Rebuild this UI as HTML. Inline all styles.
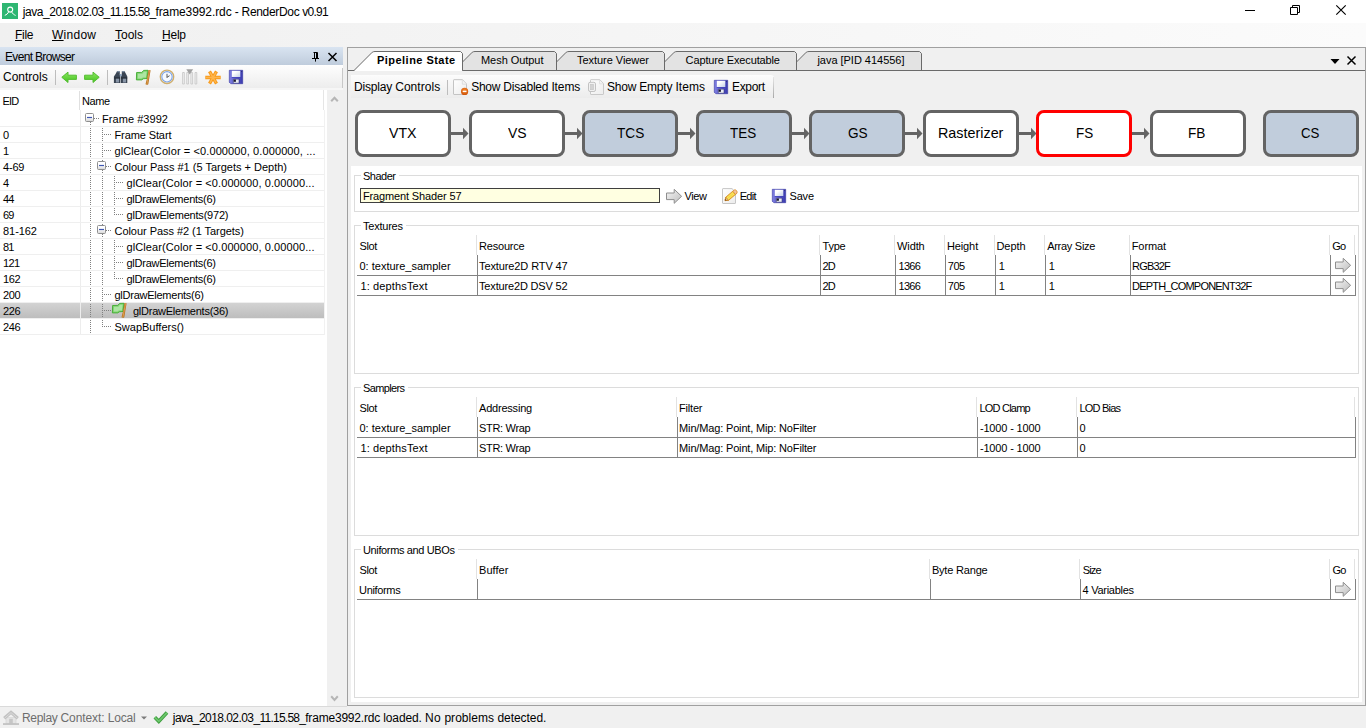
<!DOCTYPE html>
<html><head><meta charset="utf-8"><title>RenderDoc</title>
<style>
*{box-sizing:border-box;margin:0;padding:0}
html,body{width:1366px;height:728px;overflow:hidden;background:#f0f0f0}
body{position:relative;font-family:"Liberation Sans",sans-serif;font-size:12px;color:#000}
.a{position:absolute}
.t{position:absolute;white-space:pre;line-height:14px}
u{text-decoration:underline;text-underline-offset:1px;text-decoration-thickness:1px}
svg{position:absolute;overflow:visible}
.hl{position:absolute;height:1px;background:#efefef}
.vl{position:absolute;width:1px}
.box{position:absolute;border:3px solid #646464;border-radius:8px;background:#fff;height:47px;width:96px}
.box.dis{background:#c1cddc}
.grp{position:absolute;border:1px solid #dcdcdc}
.lbl{position:absolute;background:#fff;height:3px}
.rl{position:absolute;height:1px;background:#828282}
.cl{position:absolute;width:1px;background:#828282}
.hcl{position:absolute;width:1px;background:#e2e2e2}
</style></head><body>
<div class="a" style="left:0;top:0;width:1366px;height:23px;background:#fff"></div>
<div class="a" style="left:2px;top:3px;width:16px;height:16px;background:#2eb672"></div>
<svg style="left:2px;top:3px" width="16" height="16" viewBox="0 0 16 16"><circle cx="8.2" cy="6.6" r="2.5" fill="none" stroke="#fff" stroke-width="1.1"/><path d="M2.8 12.4C4.6 11.7 5.9 10.6 6.7 9M13.6 12.4C11.8 11.7 10.5 10.6 9.7 9" stroke="#fff" stroke-width="1" fill="none"/></svg>
<svg style="left:1240px;top:0" width="126" height="23" viewBox="0 0 126 23"><path d="M5 10.500h10M50.500 7.500h7v7h-7zM52.500 7.500v-2h7v7h-2" stroke="#000" stroke-width="1" fill="none"/><path d="M96.300 5.300l9.400 9.400M105.700 5.300l-9.400 9.400" stroke="#000" stroke-width="1.150" fill="none"/></svg>
<div class="a" style="left:0;top:23px;width:1366px;height:24px;background:linear-gradient(to right,#f0f0f0,#fbfbfb)"></div>
<div class="a" style="left:0;top:47px;width:343px;height:18px;background:linear-gradient(#d9e4f1,#bfccdc)"></div>
<svg style="left:308px;top:50px" width="32" height="16" viewBox="0 0 32 16"><path d="M5.500 2.500h4M6.500 2.500v6M8.500 2.500v6M9.500 2.500v6M4 8.500h7M7.500 9v2.600" stroke="#000" stroke-width="1" fill="none"/><path d="M20.500 3l8 8M28.500 3l-8 8" stroke="#000" stroke-width="1.500" fill="none"/></svg>
<div class="a" style="left:0;top:65px;width:343px;height:24px;background:linear-gradient(#fefefe,#ececec)"></div>
<div class="a" style="left:0;top:88px;width:343px;height:2px;background:#f6f6f6"></div>
<div class="vl" style="left:342px;top:68px;height:20px;background:#c8c8c8"></div>
<div class="vl" style="left:55px;top:70px;height:15px;background:#bdbdbd"></div>
<div class="vl" style="left:107px;top:70px;height:15px;background:#bdbdbd"></div>
<svg style="left:0;top:0" width="0" height="0"><defs>
<linearGradient id="gG" x1="0" y1="0" x2="0" y2="1"><stop offset="0" stop-color="#8be85f"/><stop offset="1" stop-color="#43c220"/></linearGradient>
<linearGradient id="gA" x1="0" y1="0" x2="1" y2="1"><stop offset="0" stop-color="#f6f6f6"/><stop offset="1" stop-color="#bdbdbd"/></linearGradient>
<linearGradient id="gS" x1="0" y1="0" x2="1" y2="0"><stop offset="0" stop-color="#7f7fe2"/><stop offset="1" stop-color="#3a3aae"/></linearGradient>
<linearGradient id="gL" x1="0" y1="0" x2="1" y2="1"><stop offset="0.3" stop-color="#ffffff"/><stop offset="1" stop-color="#c3cfe6"/></linearGradient>
<linearGradient id="gP" x1="0" y1="0" x2="1" y2="1"><stop offset="0" stop-color="#ffffff"/><stop offset="1" stop-color="#ececec"/></linearGradient>
<linearGradient id="gB" x1="0" y1="0" x2="0" y2="1"><stop offset="0.45" stop-color="#ffffff"/><stop offset="1" stop-color="#d4d4d4"/></linearGradient>
<radialGradient id="gO" cx="0.5" cy="0.35" r="0.6"><stop offset="0" stop-color="#f58a2c"/><stop offset="1" stop-color="#d1560a"/></radialGradient>
</defs></svg>
<svg style="left:61px;top:69px" width="16" height="16" viewBox="0 0 16 16"><path d="M0.800 8.300L7 3.100V6.200H15.400V10.400H7V13.500Z" fill="url(#gG)" stroke="#55bd33" stroke-width="1" stroke-linejoin="round"/></svg>
<svg style="left:84px;top:69px" width="16" height="16" viewBox="0 0 16 16"><path d="M15.200 8.300L9 3.100V6.200H0.600V10.400H9V13.500Z" fill="url(#gG)" stroke="#55bd33" stroke-width="1" stroke-linejoin="round"/></svg>
<svg style="left:113px;top:69px" width="16" height="16" viewBox="0 0 16 16"><path d="M4 2.200h2.800v3.300l0.500 1.500v6.900h-6.400v-6.400l1.700 -2.500zM8.800 2.200h2.800l1.400 2.800l1.300 2.500v6.400h-6.400v-6.900l0.900 -1.500z" fill="#3a4553"/><path d="M4.300 2.200h2.200v1h-2.200zM9.100 2.200h2.200v1h-2.200z" fill="#7e93ad"/><path d="M6.800 5h2v2.300h-2z" fill="#8ea6c0"/><path d="M2.900 9.300h3.100v4.200h-3.100zM9.900 9.300h3.100v4.200h-3.100z" fill="#8794a6"/><path d="M1.200 8.600h5.900v0.900h-5.900zM8 8.600h6.200v0.900h-6.200z" fill="#1f2731"/></svg>
<svg style="left:136px;top:69px" width="16" height="16" viewBox="0 0 16 16"><path d="M0.600 3.500L5.800 3.400L7.600 1.400L12 1.300L11 9.500L7.200 9.800L5.800 10.900L0.400 10.900Z" fill="#7fd46f" stroke="#3faa30" stroke-width="0.900" stroke-linejoin="round"/><path d="M2 4.800L6.300 4.700L8 2.800L10.600 2.700L9.900 8.400L6.800 8.600L5.400 9.600L1.800 9.600Z" fill="#b4e8ab" opacity="0.850"/><path d="M12.500 1.100Q13.600 0.600 14.600 1.300L12.300 15.200Q11 16.300 9.500 15.300L11.200 8.500Z" fill="#b87421"/><path d="M13.500 1.600L11 14.800" stroke="#e2a455" stroke-width="0.900" stroke-linecap="round"/></svg>
<svg style="left:159px;top:69px" width="16" height="16" viewBox="0 0 16 16"><circle cx="8" cy="7.800" r="6.700" fill="#fff" stroke="#cfae6c" stroke-width="1.400"/><circle cx="8" cy="7.800" r="5.200" fill="#f6f9ff" stroke="#7ba3e6" stroke-width="1.100"/><path d="M8 8.600V4.800M7.800 8.400L10.600 6.700" stroke="#5a5a5a" stroke-width="1" fill="none"/></svg>
<svg style="left:182px;top:69px" width="16" height="16" viewBox="0 0 16 16"><path d="M0.60 3.500h1.700v11.500h-1.700zM4.75 3.500h1.700v11.500h-1.700zM8.90 3.500h1.700v11.500h-1.700zM13.05 3.500h1.700v11.500h-1.700z" fill="#f2f2f2" stroke="#c4c4c4" stroke-width="0.800"/><path d="M4.300 0.200h6.800l-3.400 5.300z" fill="#a0a0a0"/></svg>
<svg style="left:205px;top:69px" width="16" height="16" viewBox="0 0 16 16"><g stroke="#f79a1b" stroke-width="3.300"><path d="M0.300 8.500H15.700M4.500 2.400L11.500 14.600M11.500 2.400L4.500 14.600"/></g><g stroke="#ffb54a" stroke-width="1.500"><path d="M1 8.500H15M5 3.300L11 13.700M11 3.300L5 13.700"/></g></svg>
<svg style="left:229px;top:70px" width="14" height="14" viewBox="0 0 14 14"><path d="M0.300 0.300H13.700V13.700H1.800L0.300 12.200Z" fill="url(#gS)" stroke="#3535a0" stroke-width="0.600"/><path d="M2.800 0.800h8.500v6.300h-8.500z" fill="url(#gL)"/><path d="M2.800 7.100h8.500v0.700h-8.500z" fill="#3a3ab8"/><path d="M4.300 9.200h5.700v4h-5.700z" fill="#e9ecf4" stroke="#2a2a6a" stroke-width="0.500"/><path d="M4.600 9.500h2.300v2.300h-2.300z" fill="#15152a"/><path d="M12.300 1h0.800v0.800h-0.800z" fill="#222255"/></svg>
<div class="a" style="left:0;top:90px;width:327px;height:616px;background:#fff"></div>
<div class="vl" style="left:323px;top:90px;height:20px;background:#e5e5e5"></div>
<div class="vl" style="left:79px;top:91px;height:19px;background:#e0e0e0"></div>
<div class="vl" style="left:80px;top:110px;height:225px;background:#ededed"></div>
<div class="vl" style="left:324px;top:110px;height:225px;background:#f1f1f1"></div>
<div class="a" style="left:0;top:303px;width:80px;height:15px;background:linear-gradient(#d3d3d3,#bdbdbd)"></div>
<div class="a" style="left:81px;top:303px;width:243px;height:15px;background:linear-gradient(#d3d3d3,#bdbdbd)"></div>
<div class="hl" style="left:0;top:126px;width:324px"></div>
<div class="hl" style="left:0;top:142px;width:324px"></div>
<div class="hl" style="left:0;top:158px;width:324px"></div>
<div class="hl" style="left:0;top:174px;width:324px"></div>
<div class="hl" style="left:0;top:190px;width:324px"></div>
<div class="hl" style="left:0;top:206px;width:324px"></div>
<div class="hl" style="left:0;top:222px;width:324px"></div>
<div class="hl" style="left:0;top:238px;width:324px"></div>
<div class="hl" style="left:0;top:254px;width:324px"></div>
<div class="hl" style="left:0;top:270px;width:324px"></div>
<div class="hl" style="left:0;top:286px;width:324px"></div>
<div class="hl" style="left:0;top:302px;width:324px"></div>
<div class="hl" style="left:0;top:318px;width:324px"></div>
<div class="hl" style="left:0;top:334px;width:324px"></div>
<svg style="left:0;top:0" width="330" height="340" viewBox="0 0 330 340" shape-rendering="crispEdges"><g stroke="#808080" stroke-width="1" stroke-dasharray="1 1" fill="none"><path d="M90.5 122V333"/><path d="M102.5 128V327"/><path d="M114.5 176V215"/><path d="M114.5 240V279"/><path d="M94 118.5H99"/><path d="M104 134.5H111"/><path d="M104 150.5H111"/><path d="M106 166.5H111"/><path d="M116 182.5H123"/><path d="M116 198.5H123"/><path d="M116 214.5H123"/><path d="M106 230.5H111"/><path d="M116 246.5H123"/><path d="M116 262.5H123"/><path d="M116 278.5H123"/><path d="M104 294.5H111"/><path d="M104 310.5H111"/><path d="M104 326.5H111"/></g></svg>
<div class="hl" style="left:81px;top:126px;width:40px"></div>
<div class="hl" style="left:81px;top:142px;width:40px"></div>
<div class="hl" style="left:81px;top:158px;width:40px"></div>
<div class="hl" style="left:81px;top:174px;width:40px"></div>
<div class="hl" style="left:81px;top:190px;width:40px"></div>
<div class="hl" style="left:81px;top:206px;width:40px"></div>
<div class="hl" style="left:81px;top:222px;width:40px"></div>
<div class="hl" style="left:81px;top:238px;width:40px"></div>
<div class="hl" style="left:81px;top:254px;width:40px"></div>
<div class="hl" style="left:81px;top:270px;width:40px"></div>
<div class="hl" style="left:81px;top:286px;width:40px"></div>
<div class="hl" style="left:81px;top:302px;width:40px"></div>
<div class="hl" style="left:81px;top:318px;width:40px"></div>
<div class="hl" style="left:81px;top:334px;width:40px"></div>
<svg style="left:85px;top:113px" width="9" height="9" viewBox="0 0 9 9"><rect x="0.500" y="0.500" width="8" height="8" rx="1" fill="url(#gB)" stroke="#8f8f8f" stroke-width="1"/><path d="M2 4.500h5" stroke="#3f57b3" stroke-width="1.200"/></svg>
<svg style="left:97px;top:161px" width="9" height="9" viewBox="0 0 9 9"><rect x="0.500" y="0.500" width="8" height="8" rx="1" fill="url(#gB)" stroke="#8f8f8f" stroke-width="1"/><path d="M2 4.500h5" stroke="#3f57b3" stroke-width="1.200"/></svg>
<svg style="left:97px;top:225px" width="9" height="9" viewBox="0 0 9 9"><rect x="0.500" y="0.500" width="8" height="8" rx="1" fill="url(#gB)" stroke="#8f8f8f" stroke-width="1"/><path d="M2 4.500h5" stroke="#3f57b3" stroke-width="1.200"/></svg>
<svg style="left:112px;top:302px" width="16" height="16" viewBox="0 0 16 16"><path d="M0.600 3.500L5.800 3.400L7.600 1.400L12 1.300L11 9.500L7.200 9.800L5.800 10.900L0.400 10.900Z" fill="#7fd46f" stroke="#3faa30" stroke-width="0.900" stroke-linejoin="round"/><path d="M2 4.800L6.300 4.700L8 2.800L10.600 2.700L9.900 8.400L6.800 8.600L5.400 9.600L1.800 9.600Z" fill="#b4e8ab" opacity="0.850"/><path d="M12.500 1.100Q13.600 0.600 14.600 1.300L12.300 15.200Q11 16.300 9.500 15.300L11.200 8.500Z" fill="#b87421"/><path d="M13.500 1.600L11 14.800" stroke="#e2a455" stroke-width="0.900" stroke-linecap="round"/></svg>
<svg style="left:0;top:0" width="345" height="706" viewBox="0 0 345 706"><path d="M331.200 101.300l3.300 -3.600l3.300 3.600M331.200 696.300l3.300 3.600l3.300 -3.600" stroke="#b6b6b6" stroke-width="2" fill="none"/></svg>
<div class="a" style="left:347px;top:47px;width:1019px;height:659px;border:1px solid #a0a0a0;background:#f0f0f0"></div>
<!--TABS-->
<div class="a" style="left:351px;top:75px;width:423px;height:23px;background:linear-gradient(#fcfcfc,#ececec);border-radius:0 3px 0 0"></div>
<div class="vl" style="left:773px;top:77px;height:21px;background:linear-gradient(#e6e6e6,#a8a8a8)"></div>
<div class="vl" style="left:447px;top:80px;height:15px;background:#bdbdbd"></div>
<svg style="left:453px;top:79px" width="16" height="16" viewBox="0 0 16 16"><path d="M1 0.700Q0.500 0.700 0.500 1.200V15Q0.500 15.500 1 15.500H13Q13.500 15.500 13.500 15V5L9.500 0.700Z" fill="url(#gP)" stroke="#c4c4c4" stroke-width="1"/><path d="M9.300 0.900V5.200H13.400" fill="#f3f3f3" stroke="#d9d9d9" stroke-width="0.800"/><circle cx="11.600" cy="12.400" r="3.600" fill="url(#gO)"/><path d="M9.700 12.400H13.500" stroke="#fff" stroke-width="1.400"/></svg>
<svg style="left:588px;top:79px" width="16" height="16" viewBox="0 0 16 16"><path d="M3 0.700Q2.500 0.700 2.500 1.200V15Q2.500 15.500 3 15.500H15Q15.500 15.500 15.500 15V4.500L11.800 0.700Z" fill="url(#gP)" stroke="#c9c9c9" stroke-width="1"/><path d="M11.500 1V4.800H15.300" fill="#f3f3f3" stroke="#dedede" stroke-width="0.800"/><rect x="0.500" y="3.300" width="7" height="9.200" rx="1.600" fill="#f1f1f1" stroke="#c2c2c2" stroke-width="1"/><rect x="2.600" y="5.300" width="2.800" height="5.400" fill="#d3d3d3" stroke="#c4c4c4" stroke-width="0.600"/></svg>
<svg style="left:714px;top:80px" width="14" height="14" viewBox="0 0 14 14"><path d="M0.300 0.300H13.700V13.700H1.800L0.300 12.200Z" fill="url(#gS)" stroke="#3535a0" stroke-width="0.600"/><path d="M2.800 0.800h8.500v6.300h-8.500z" fill="url(#gL)"/><path d="M2.800 7.100h8.500v0.700h-8.500z" fill="#3a3ab8"/><path d="M4.300 9.200h5.700v4h-5.700z" fill="#e9ecf4" stroke="#2a2a6a" stroke-width="0.500"/><path d="M4.600 9.500h2.300v2.300h-2.300z" fill="#15152a"/><path d="M12.300 1h0.800v0.800h-0.800z" fill="#222255"/></svg>
<div class="box" style="left:355.00px;top:110px"></div>
<svg style="left:451.00px;top:126px" width="17" height="15" viewBox="0 0 17 15"><path d="M0 7.500h13" stroke="#646464" stroke-width="3" fill="none"/><path d="M12 1.700l5.500 5.800l-5.500 5.800z" fill="#646464"/></svg>
<div class="box" style="left:468.50px;top:110px"></div>
<svg style="left:564.50px;top:126px" width="17" height="15" viewBox="0 0 17 15"><path d="M0 7.500h13" stroke="#646464" stroke-width="3" fill="none"/><path d="M12 1.700l5.500 5.800l-5.500 5.800z" fill="#646464"/></svg>
<div class="box dis" style="left:582.00px;top:110px"></div>
<svg style="left:678.00px;top:126px" width="17" height="15" viewBox="0 0 17 15"><path d="M0 7.500h13" stroke="#646464" stroke-width="3" fill="none"/><path d="M12 1.700l5.500 5.800l-5.500 5.800z" fill="#646464"/></svg>
<div class="box dis" style="left:695.50px;top:110px"></div>
<svg style="left:791.50px;top:126px" width="17" height="15" viewBox="0 0 17 15"><path d="M0 7.500h13" stroke="#646464" stroke-width="3" fill="none"/><path d="M12 1.700l5.500 5.800l-5.500 5.800z" fill="#646464"/></svg>
<div class="box dis" style="left:809.00px;top:110px"></div>
<svg style="left:905.00px;top:126px" width="17" height="15" viewBox="0 0 17 15"><path d="M0 7.500h13" stroke="#646464" stroke-width="3" fill="none"/><path d="M12 1.700l5.500 5.800l-5.500 5.800z" fill="#646464"/></svg>
<div class="box" style="left:922.50px;top:110px"></div>
<svg style="left:1018.50px;top:126px" width="17" height="15" viewBox="0 0 17 15"><path d="M0 7.500h13" stroke="#646464" stroke-width="3" fill="none"/><path d="M12 1.700l5.500 5.800l-5.500 5.800z" fill="#646464"/></svg>
<div class="box" style="left:1036.00px;top:110px;border-color:#ff0000"></div>
<svg style="left:1132.00px;top:126px" width="17" height="15" viewBox="0 0 17 15"><path d="M0 7.500h13" stroke="#646464" stroke-width="3" fill="none"/><path d="M12 1.700l5.500 5.800l-5.500 5.800z" fill="#646464"/></svg>
<div class="box" style="left:1149.50px;top:110px"></div>
<div class="box dis" style="left:1263.00px;top:110px"></div>
<!--STAGETEXT-->
<div class="a" style="left:351px;top:166px;width:1011px;height:536px;background:#fff"></div>
<svg style="left:0;top:0" width="1366" height="72" viewBox="0 0 1366 72"><path d="M788 70.5L806.3 52.2Q807.5 51.5 809 51.5L919.5 51.5L921.5 53.5L921.5 70.5" fill="#e3e3e3" stroke="#6a6a6a" stroke-width="1"/><path d="M656 70.5L674.3 52.2Q675.5 51.5 677 51.5L794.5 51.5L796.5 53.5L796.5 70.5" fill="#e3e3e3" stroke="#6a6a6a" stroke-width="1"/><path d="M548 70.5L566.3 52.2Q567.5 51.5 569 51.5L662.5 51.5L664.5 53.5L664.5 70.5" fill="#e3e3e3" stroke="#6a6a6a" stroke-width="1"/><path d="M454 70.5L472.3 52.2Q473.5 51.5 475 51.5L554.5 51.5L556.5 53.5L556.5 70.5" fill="#e3e3e3" stroke="#6a6a6a" stroke-width="1"/><path d="M348 70.5H1365" stroke="#6a6a6a" stroke-width="1"/><path d="M354 70.5L372.3 52.2Q373.5 51.5 375 51.5L460.5 51.5L462.5 53.5L462.5 70.5" fill="#fff" stroke="#6a6a6a" stroke-width="1"/><path d="M354.8 70.5H462" stroke="#fff" stroke-width="1"/><path d="M1330.500 59h9l-4.500 5z" fill="#000"/><path d="M1347.500 56.500l8 8M1355.500 56.500l-8 8" stroke="#000" stroke-width="1.500" fill="none"/></svg>
<div class="grp" style="left:354px;top:175px;width:1005px;height:37px"></div>
<div class="lbl" style="left:361px;top:174px;width:38px"></div>
<div class="grp" style="left:354px;top:225px;width:1005px;height:149px"></div>
<div class="lbl" style="left:361px;top:224px;width:45px"></div>
<div class="grp" style="left:354px;top:387px;width:1005px;height:149px"></div>
<div class="lbl" style="left:361px;top:386px;width:47px"></div>
<div class="grp" style="left:354px;top:549px;width:1005px;height:149px"></div>
<div class="lbl" style="left:361px;top:548px;width:97px"></div>
<div class="a" style="left:360px;top:188px;width:300px;height:15px;background:#ffffe1;border:1px solid #3f3f3f"></div>
<svg style="left:666px;top:188px" width="16" height="16" viewBox="0 0 16 16"><path d="M0.500 5H8.200V1.300L15.600 8.300L8.200 15.300V11.600H0.500Z" fill="url(#gA)" stroke="#8e8e8e" stroke-width="1" stroke-linejoin="round"/></svg>
<svg style="left:722px;top:188px" width="16" height="16" viewBox="0 0 16 16"><path d="M1 0.600Q0.500 0.600 0.500 1.100V15Q0.500 15.500 1 15.500H13Q13.500 15.500 13.500 15V4L10 0.600Z" fill="url(#gP)" stroke="#c6c6c6" stroke-width="1"/><path d="M3 12.600L3.770 9.190L10.780 3.220L13.500 6.420L6.490 12.390Z" fill="#f5d840" stroke="#d98b25" stroke-width="0.900" stroke-linejoin="round"/><path d="M5.300 9.600L11.600 4.300M6.300 10.800L12.600 5.500" stroke="#fbeb90" stroke-width="0.700" stroke-dasharray="1 0.600"/><path d="M10.780 3.220L12.300 1.950Q13.600 1.500 14.600 2.700Q15.600 4 14.900 5.200L13.500 6.420Z" fill="#f3c29c" stroke="#d98b25" stroke-width="0.800" stroke-linejoin="round"/><path d="M3 12.600L3.770 9.190L6.490 12.390Z" fill="#eec393" stroke="#b5721f" stroke-width="0.600" stroke-linejoin="round"/><path d="M3 12.600L3.400 11L4.600 12.300Z" fill="#5a3a12"/></svg>
<svg style="left:772px;top:189px" width="14" height="14" viewBox="0 0 14 14"><path d="M0.300 0.300H13.700V13.700H1.800L0.300 12.200Z" fill="url(#gS)" stroke="#3535a0" stroke-width="0.600"/><path d="M2.800 0.800h8.500v6.300h-8.500z" fill="url(#gL)"/><path d="M2.800 7.100h8.500v0.700h-8.500z" fill="#3a3ab8"/><path d="M4.300 9.200h5.700v4h-5.700z" fill="#e9ecf4" stroke="#2a2a6a" stroke-width="0.500"/><path d="M4.600 9.500h2.300v2.300h-2.300z" fill="#15152a"/><path d="M12.300 1h0.800v0.800h-0.800z" fill="#222255"/></svg>
<div class="hcl" style="left:476px;top:235px;height:20px"></div>
<div class="cl" style="left:477px;top:255px;height:41px"></div>
<div class="hcl" style="left:819px;top:235px;height:20px"></div>
<div class="cl" style="left:820px;top:255px;height:41px"></div>
<div class="hcl" style="left:894px;top:235px;height:20px"></div>
<div class="cl" style="left:895px;top:255px;height:41px"></div>
<div class="hcl" style="left:944px;top:235px;height:20px"></div>
<div class="cl" style="left:945px;top:255px;height:41px"></div>
<div class="hcl" style="left:994px;top:235px;height:20px"></div>
<div class="cl" style="left:995px;top:255px;height:41px"></div>
<div class="hcl" style="left:1044px;top:235px;height:20px"></div>
<div class="cl" style="left:1045px;top:255px;height:41px"></div>
<div class="hcl" style="left:1129px;top:235px;height:20px"></div>
<div class="cl" style="left:1130px;top:255px;height:41px"></div>
<div class="hcl" style="left:1329px;top:235px;height:20px"></div>
<div class="cl" style="left:1330px;top:255px;height:41px"></div>
<div class="hcl" style="left:1354px;top:235px;height:20px"></div>
<div class="cl" style="left:1355px;top:255px;height:41px"></div>
<div class="rl" style="left:357px;top:275px;width:999px"></div>
<div class="rl" style="left:357px;top:295px;width:999px"></div>
<div class="hcl" style="left:476px;top:397px;height:20px"></div>
<div class="cl" style="left:477px;top:417px;height:41px"></div>
<div class="hcl" style="left:676px;top:397px;height:20px"></div>
<div class="cl" style="left:677px;top:417px;height:41px"></div>
<div class="hcl" style="left:976px;top:397px;height:20px"></div>
<div class="cl" style="left:977px;top:417px;height:41px"></div>
<div class="hcl" style="left:1076px;top:397px;height:20px"></div>
<div class="cl" style="left:1077px;top:417px;height:41px"></div>
<div class="hcl" style="left:1354px;top:397px;height:20px"></div>
<div class="cl" style="left:1355px;top:417px;height:41px"></div>
<div class="rl" style="left:357px;top:437px;width:999px"></div>
<div class="rl" style="left:357px;top:457px;width:999px"></div>
<div class="hcl" style="left:476px;top:559px;height:20px"></div>
<div class="cl" style="left:477px;top:579px;height:21px"></div>
<div class="hcl" style="left:929px;top:559px;height:20px"></div>
<div class="cl" style="left:930px;top:579px;height:21px"></div>
<div class="hcl" style="left:1079px;top:559px;height:20px"></div>
<div class="cl" style="left:1080px;top:579px;height:21px"></div>
<div class="hcl" style="left:1329px;top:559px;height:20px"></div>
<div class="cl" style="left:1330px;top:579px;height:21px"></div>
<div class="hcl" style="left:1354px;top:559px;height:20px"></div>
<div class="cl" style="left:1355px;top:579px;height:21px"></div>
<div class="rl" style="left:357px;top:599px;width:999px"></div>
<svg style="left:1335px;top:257px" width="16" height="16" viewBox="0 0 16 16"><path d="M0.500 5H8.200V1.300L15.600 8.300L8.200 15.300V11.600H0.500Z" fill="url(#gA)" stroke="#8e8e8e" stroke-width="1" stroke-linejoin="round"/></svg>
<svg style="left:1335px;top:277px" width="16" height="16" viewBox="0 0 16 16"><path d="M0.500 5H8.200V1.300L15.600 8.300L8.200 15.300V11.600H0.500Z" fill="url(#gA)" stroke="#8e8e8e" stroke-width="1" stroke-linejoin="round"/></svg>
<svg style="left:1335px;top:581px" width="16" height="16" viewBox="0 0 16 16"><path d="M0.500 5H8.200V1.300L15.600 8.300L8.200 15.300V11.600H0.500Z" fill="url(#gA)" stroke="#8e8e8e" stroke-width="1" stroke-linejoin="round"/></svg>
<div class="a" style="left:0;top:706px;width:347px;height:1px;background:#dadada"></div>
<svg style="left:141px;top:716px" width="6" height="4" viewBox="0 0 6 4"><path d="M0 0.500h6l-3 3z" fill="#7a7a7a"/></svg>
<svg style="left:3px;top:710px" width="16" height="16" viewBox="0 0 16 16"><path d="M3 7.500h10v6h-10z" fill="#e4e4e4" stroke="#d2d2d2" stroke-width="0.600"/><path d="M6.200 8.700h3.600v4.800h-3.600z" fill="#c6c6c6"/><path d="M1.200 8.300L8 2.400L14.800 8.300" fill="none" stroke="#c2c2c2" stroke-width="3.200" stroke-linejoin="miter"/><path d="M1.400 8.300L8 2.600L14.600 8.300" fill="none" stroke="#d9d9d9" stroke-width="1" stroke-linejoin="miter"/><path d="M0 13.200h16v1.700h-16z" fill="#c0c0c0"/></svg>
<svg style="left:152.5px;top:710px" width="16" height="14" viewBox="0 0 16 14"><path d="M1.800 7.300L5.800 11.300L14 2.600" fill="none" stroke="#3f9e3f" stroke-width="3.600" stroke-linejoin="miter"/><path d="M1.800 7.300L5.800 11.300L14 2.600" fill="none" stroke="#6cc66c" stroke-width="1.800" stroke-linejoin="miter"/></svg>
<div class="t" style="left:22.8px;top:5px;font-size:12px"><span style="letter-spacing:-0.438px">java_</span><span style="letter-spacing:-0.576px">2018.02.03_</span><span style="letter-spacing:-0.756px">11.15.58_</span><span style="letter-spacing:-0.094px">frame3992.rdc </span><span style="letter-spacing:-0.272px">- </span><span style="letter-spacing:-0.333px">RenderDoc </span><span style="letter-spacing:-0.732px">v0.91</span></div>
<div class="t" style="left:354px;top:80px;font-size:12px"><span style="letter-spacing:-0.186px">Display </span><span style="letter-spacing:0.039px">Controls</span></div>
<div class="t" style="left:471.2px;top:80px;font-size:12px"><span style="letter-spacing:-0.252px">Show </span><span style="letter-spacing:-0.215px">Disabled </span><span style="letter-spacing:-0.109px">Items</span></div>
<div class="t" style="left:607px;top:80px;font-size:12px"><span style="letter-spacing:-0.232px">Show </span><span style="letter-spacing:-0.191px">Empty </span><span style="letter-spacing:0.051px">Items</span></div>
<div class="t" style="left:22px;top:711px;font-size:12px;color:#6d6d6d"><span style="letter-spacing:-0.312px">Replay </span><span style="letter-spacing:-0.103px">Context: </span><span style="letter-spacing:-0.138px">Local</span></div>
<div class="t" style="left:172.7px;top:711px;font-size:12px"><span style="letter-spacing:-0.477px">java_</span><span style="letter-spacing:-0.567px">2018.02.03_</span><span style="letter-spacing:-0.756px">11.15.58_</span><span style="letter-spacing:-0.194px">frame3992.rdc </span><span style="letter-spacing:-0.113px">loaded. </span><span style="letter-spacing:0.237px">No </span><span style="letter-spacing:0.035px">problems </span><span style="letter-spacing:-0.053px">detected.</span></div>
<div class="t" style="left:15px;top:28px;font-size:12px;letter-spacing:-0.281px"><u>F</u>ile</div>
<div class="t" style="left:52px;top:28px;font-size:12px;letter-spacing:0.263px"><u>W</u>indow</div>
<div class="t" style="left:115px;top:28px;font-size:12px"><u>T</u>ools</div>
<div class="t" style="left:162px;top:28px;font-size:12px;letter-spacing:-0.229px"><u>H</u>elp</div>
<div class="t" style="left:5px;top:50px;font-size:12px;letter-spacing:-0.669px">Event Browser</div>
<div class="t" style="left:3px;top:70px;font-size:12px">Controls</div>
<div class="t" style="left:2.5px;top:94px;font-size:11px;letter-spacing:-0.800px">EID</div>
<div class="t" style="left:82px;top:94px;font-size:11px;letter-spacing:-0.448px">Name</div>
<div class="t" style="left:102px;top:112px;font-size:11px;letter-spacing:0.056px">Frame #3992</div>
<div class="t" style="left:3px;top:128px;font-size:11px;letter-spacing:-0.625px">0</div>
<div class="t" style="left:114.5px;top:128px;font-size:11px;letter-spacing:-0.108px">Frame Start</div>
<div class="t" style="left:3px;top:144px;font-size:11px;letter-spacing:-0.800px">1</div>
<div class="t" style="left:114.5px;top:144px;font-size:11px;letter-spacing:0.105px">glClear(Color = &lt;0.000000, 0.000000, ...</div>
<div class="t" style="left:3px;top:160px;font-size:11px;letter-spacing:-0.177px">4-69</div>
<div class="t" style="left:114.5px;top:160px;font-size:11px">Colour Pass #1 (5 Targets + Depth)</div>
<div class="t" style="left:3px;top:176px;font-size:11px;letter-spacing:-0.625px">4</div>
<div class="t" style="left:126.5px;top:176px;font-size:11px;letter-spacing:0.092px">glClear(Color = &lt;0.000000, 0.00000...</div>
<div class="t" style="left:3px;top:192px;font-size:11px;letter-spacing:-0.750px">44</div>
<div class="t" style="left:126.5px;top:192px;font-size:11px;letter-spacing:-0.252px">glDrawElements(6)</div>
<div class="t" style="left:3px;top:208px;font-size:11px;letter-spacing:-0.750px">69</div>
<div class="t" style="left:126.5px;top:208px;font-size:11px;letter-spacing:-0.209px">glDrawElements(972)</div>
<div class="t" style="left:3px;top:224px;font-size:11px;letter-spacing:-0.053px">81-162</div>
<div class="t" style="left:114.5px;top:224px;font-size:11px;letter-spacing:-0.046px">Colour Pass #2 (1 Targets)</div>
<div class="t" style="left:3px;top:240px;font-size:11px;letter-spacing:-0.750px">81</div>
<div class="t" style="left:126.5px;top:240px;font-size:11px;letter-spacing:0.092px">glClear(Color = &lt;0.000000, 0.00000...</div>
<div class="t" style="left:3px;top:256px;font-size:11px;letter-spacing:-0.680px">121</div>
<div class="t" style="left:126.5px;top:256px;font-size:11px;letter-spacing:-0.252px">glDrawElements(6)</div>
<div class="t" style="left:3px;top:272px;font-size:11px;letter-spacing:-0.430px">162</div>
<div class="t" style="left:126.5px;top:272px;font-size:11px;letter-spacing:-0.252px">glDrawElements(6)</div>
<div class="t" style="left:3px;top:288px;font-size:11px;letter-spacing:-0.430px">200</div>
<div class="t" style="left:114.5px;top:288px;font-size:11px;letter-spacing:-0.252px">glDrawElements(6)</div>
<div class="t" style="left:3px;top:304px;font-size:11px;letter-spacing:-0.430px">226</div>
<div class="t" style="left:133px;top:304px;font-size:11px;letter-spacing:-0.244px">glDrawElements(36)</div>
<div class="t" style="left:3px;top:320px;font-size:11px;letter-spacing:-0.430px">246</div>
<div class="t" style="left:114.5px;top:320px;font-size:11px">SwapBuffers()</div>
<div class="t" style="left:732px;top:80px;font-size:12px;letter-spacing:-0.338px">Export</div>
<div class="t" style="left:388.5px;top:125.5px;font-size:15px;transform:scaleX(0.9456);transform-origin:0 0">VTX</div>
<div class="t" style="left:507.5px;top:125.5px;font-size:15px;transform:scaleX(0.9293);transform-origin:0 0">VS</div>
<div class="t" style="left:616.5px;top:125.5px;font-size:15px;transform:scaleX(0.9100);transform-origin:0 0">TCS</div>
<div class="t" style="left:729.8px;top:125.5px;font-size:15px;transform:scaleX(0.8976);transform-origin:0 0">TES</div>
<div class="t" style="left:847.5px;top:125.5px;font-size:15px;transform:scaleX(0.9084);transform-origin:0 0">GS</div>
<div class="t" style="left:937.9px;top:125.5px;font-size:15px;transform:scaleX(0.9567);transform-origin:0 0">Rasterizer</div>
<div class="t" style="left:1076.0px;top:125.5px;font-size:15px;transform:scaleX(0.8971);transform-origin:0 0">FS</div>
<div class="t" style="left:1187.8px;top:125.5px;font-size:15px;transform:scaleX(0.9076);transform-origin:0 0">FB</div>
<div class="t" style="left:1301.3px;top:125.5px;font-size:15px;transform:scaleX(0.8828);transform-origin:0 0">CS</div>
<div class="t" style="left:377px;top:53px;font-size:11px;letter-spacing:0.466px;font-weight:700">Pipeline State</div>
<div class="t" style="left:481px;top:53px;font-size:11px;letter-spacing:-0.048px">Mesh Output</div>
<div class="t" style="left:577px;top:53px;font-size:11px;letter-spacing:-0.043px">Texture Viewer</div>
<div class="t" style="left:685.6px;top:53px;font-size:11px;letter-spacing:-0.131px">Capture Executable</div>
<div class="t" style="left:817.4px;top:53px;font-size:11px;letter-spacing:-0.022px">java [PID 414556]</div>
<div class="t" style="left:363px;top:169px;font-size:11px;letter-spacing:-0.497px">Shader</div>
<div class="t" style="left:363px;top:219px;font-size:11px;letter-spacing:-0.225px">Textures</div>
<div class="t" style="left:363px;top:381px;font-size:11px;letter-spacing:-0.638px">Samplers</div>
<div class="t" style="left:363px;top:543px;font-size:11px;letter-spacing:-0.363px">Uniforms and UBOs</div>
<div class="t" style="left:363px;top:189px;font-size:11px;letter-spacing:-0.141px">Fragment Shader 57</div>
<div class="t" style="left:684.5px;top:189px;font-size:11px;letter-spacing:-0.385px">View</div>
<div class="t" style="left:739.7px;top:189px;font-size:11px;letter-spacing:-0.690px">Edit</div>
<div class="t" style="left:789.5px;top:189px;font-size:11px;letter-spacing:-0.193px">Save</div>
<div class="t" style="left:359.5px;top:239px;font-size:11px;letter-spacing:-0.423px">Slot</div>
<div class="t" style="left:479.0px;top:239px;font-size:11px;letter-spacing:-0.197px">Resource</div>
<div class="t" style="left:822.5px;top:239px;font-size:11px;letter-spacing:-0.220px">Type</div>
<div class="t" style="left:897.1px;top:239px;font-size:11px;letter-spacing:-0.131px">Width</div>
<div class="t" style="left:946.9px;top:239px;font-size:11px;letter-spacing:-0.099px">Height</div>
<div class="t" style="left:996.5px;top:239px;font-size:11px;letter-spacing:-0.090px">Depth</div>
<div class="t" style="left:1047.2px;top:239px;font-size:11px;letter-spacing:-0.283px">Array Size</div>
<div class="t" style="left:1131.7px;top:239px;font-size:11px;letter-spacing:-0.069px">Format</div>
<div class="t" style="left:1332.2px;top:239px;font-size:11px;letter-spacing:-0.800px">Go</div>
<div class="t" style="left:359.5px;top:259px;font-size:11px">0: texture_sampler</div>
<div class="t" style="left:479.0px;top:259px;font-size:11px;letter-spacing:-0.106px">Texture2D RTV 47</div>
<div class="t" style="left:822.5px;top:259px;font-size:11px;letter-spacing:-0.800px">2D</div>
<div class="t" style="left:898.5px;top:259px;font-size:11px;letter-spacing:-0.695px">1366</div>
<div class="t" style="left:947.7px;top:259px;font-size:11px;letter-spacing:-0.430px">705</div>
<div class="t" style="left:998.7px;top:259px;font-size:11px;letter-spacing:-0.800px">1</div>
<div class="t" style="left:1048.7px;top:259px;font-size:11px;letter-spacing:-0.800px">1</div>
<div class="t" style="left:1132.0px;top:259px;font-size:11px;letter-spacing:-0.800px">RGB32F</div>
<div class="t" style="left:360.5px;top:279px;font-size:11px;letter-spacing:0.130px">1: depthsText</div>
<div class="t" style="left:479.0px;top:279px;font-size:11px;letter-spacing:-0.161px">Texture2D DSV 52</div>
<div class="t" style="left:822.5px;top:279px;font-size:11px;letter-spacing:-0.800px">2D</div>
<div class="t" style="left:898.5px;top:279px;font-size:11px;letter-spacing:-0.695px">1366</div>
<div class="t" style="left:947.7px;top:279px;font-size:11px;letter-spacing:-0.430px">705</div>
<div class="t" style="left:998.7px;top:279px;font-size:11px;letter-spacing:-0.800px">1</div>
<div class="t" style="left:1048.7px;top:279px;font-size:11px;letter-spacing:-0.800px">1</div>
<div class="t" style="left:1132.0px;top:279px;font-size:11px;letter-spacing:-0.800px">DEPTH_COMPONENT32F</div>
<div class="t" style="left:359.5px;top:401px;font-size:11px;letter-spacing:-0.423px">Slot</div>
<div class="t" style="left:479.0px;top:401px;font-size:11px;letter-spacing:-0.205px">Addressing</div>
<div class="t" style="left:679.0px;top:401px;font-size:11px;letter-spacing:-0.191px">Filter</div>
<div class="t" style="left:979.5px;top:401px;font-size:11px;letter-spacing:-0.784px">LOD Clamp</div>
<div class="t" style="left:1079.5px;top:401px;font-size:11px;letter-spacing:-0.797px">LOD Bias</div>
<div class="t" style="left:359.5px;top:421px;font-size:11px">0: texture_sampler</div>
<div class="t" style="left:479.0px;top:421px;font-size:11px;letter-spacing:-0.313px">STR: Wrap</div>
<div class="t" style="left:679.1px;top:421px;font-size:11px;letter-spacing:-0.158px">Min/Mag: Point, Mip: NoFilter</div>
<div class="t" style="left:979.9px;top:421px;font-size:11px;letter-spacing:-0.154px">-1000 - 1000</div>
<div class="t" style="left:1079.5px;top:421px;font-size:11px;letter-spacing:-0.800px">0</div>
<div class="t" style="left:360.5px;top:441px;font-size:11px;letter-spacing:0.130px">1: depthsText</div>
<div class="t" style="left:479.0px;top:441px;font-size:11px;letter-spacing:-0.313px">STR: Wrap</div>
<div class="t" style="left:679.1px;top:441px;font-size:11px;letter-spacing:-0.158px">Min/Mag: Point, Mip: NoFilter</div>
<div class="t" style="left:979.9px;top:441px;font-size:11px;letter-spacing:-0.154px">-1000 - 1000</div>
<div class="t" style="left:1079.5px;top:441px;font-size:11px;letter-spacing:-0.800px">0</div>
<div class="t" style="left:359.5px;top:563px;font-size:11px;letter-spacing:-0.423px">Slot</div>
<div class="t" style="left:479.0px;top:563px;font-size:11px;letter-spacing:0.049px">Buffer</div>
<div class="t" style="left:931.9px;top:563px;font-size:11px;letter-spacing:-0.187px">Byte Range</div>
<div class="t" style="left:1082.7px;top:563px;font-size:11px;letter-spacing:-0.800px">Size</div>
<div class="t" style="left:1332.5px;top:563px;font-size:11px;letter-spacing:-0.800px">Go</div>
<div class="t" style="left:359.1px;top:583px;font-size:11px;letter-spacing:-0.345px">Uniforms</div>
<div class="t" style="left:1082.5px;top:583px;font-size:11px;letter-spacing:-0.262px">4 Variables</div>
</body></html>
